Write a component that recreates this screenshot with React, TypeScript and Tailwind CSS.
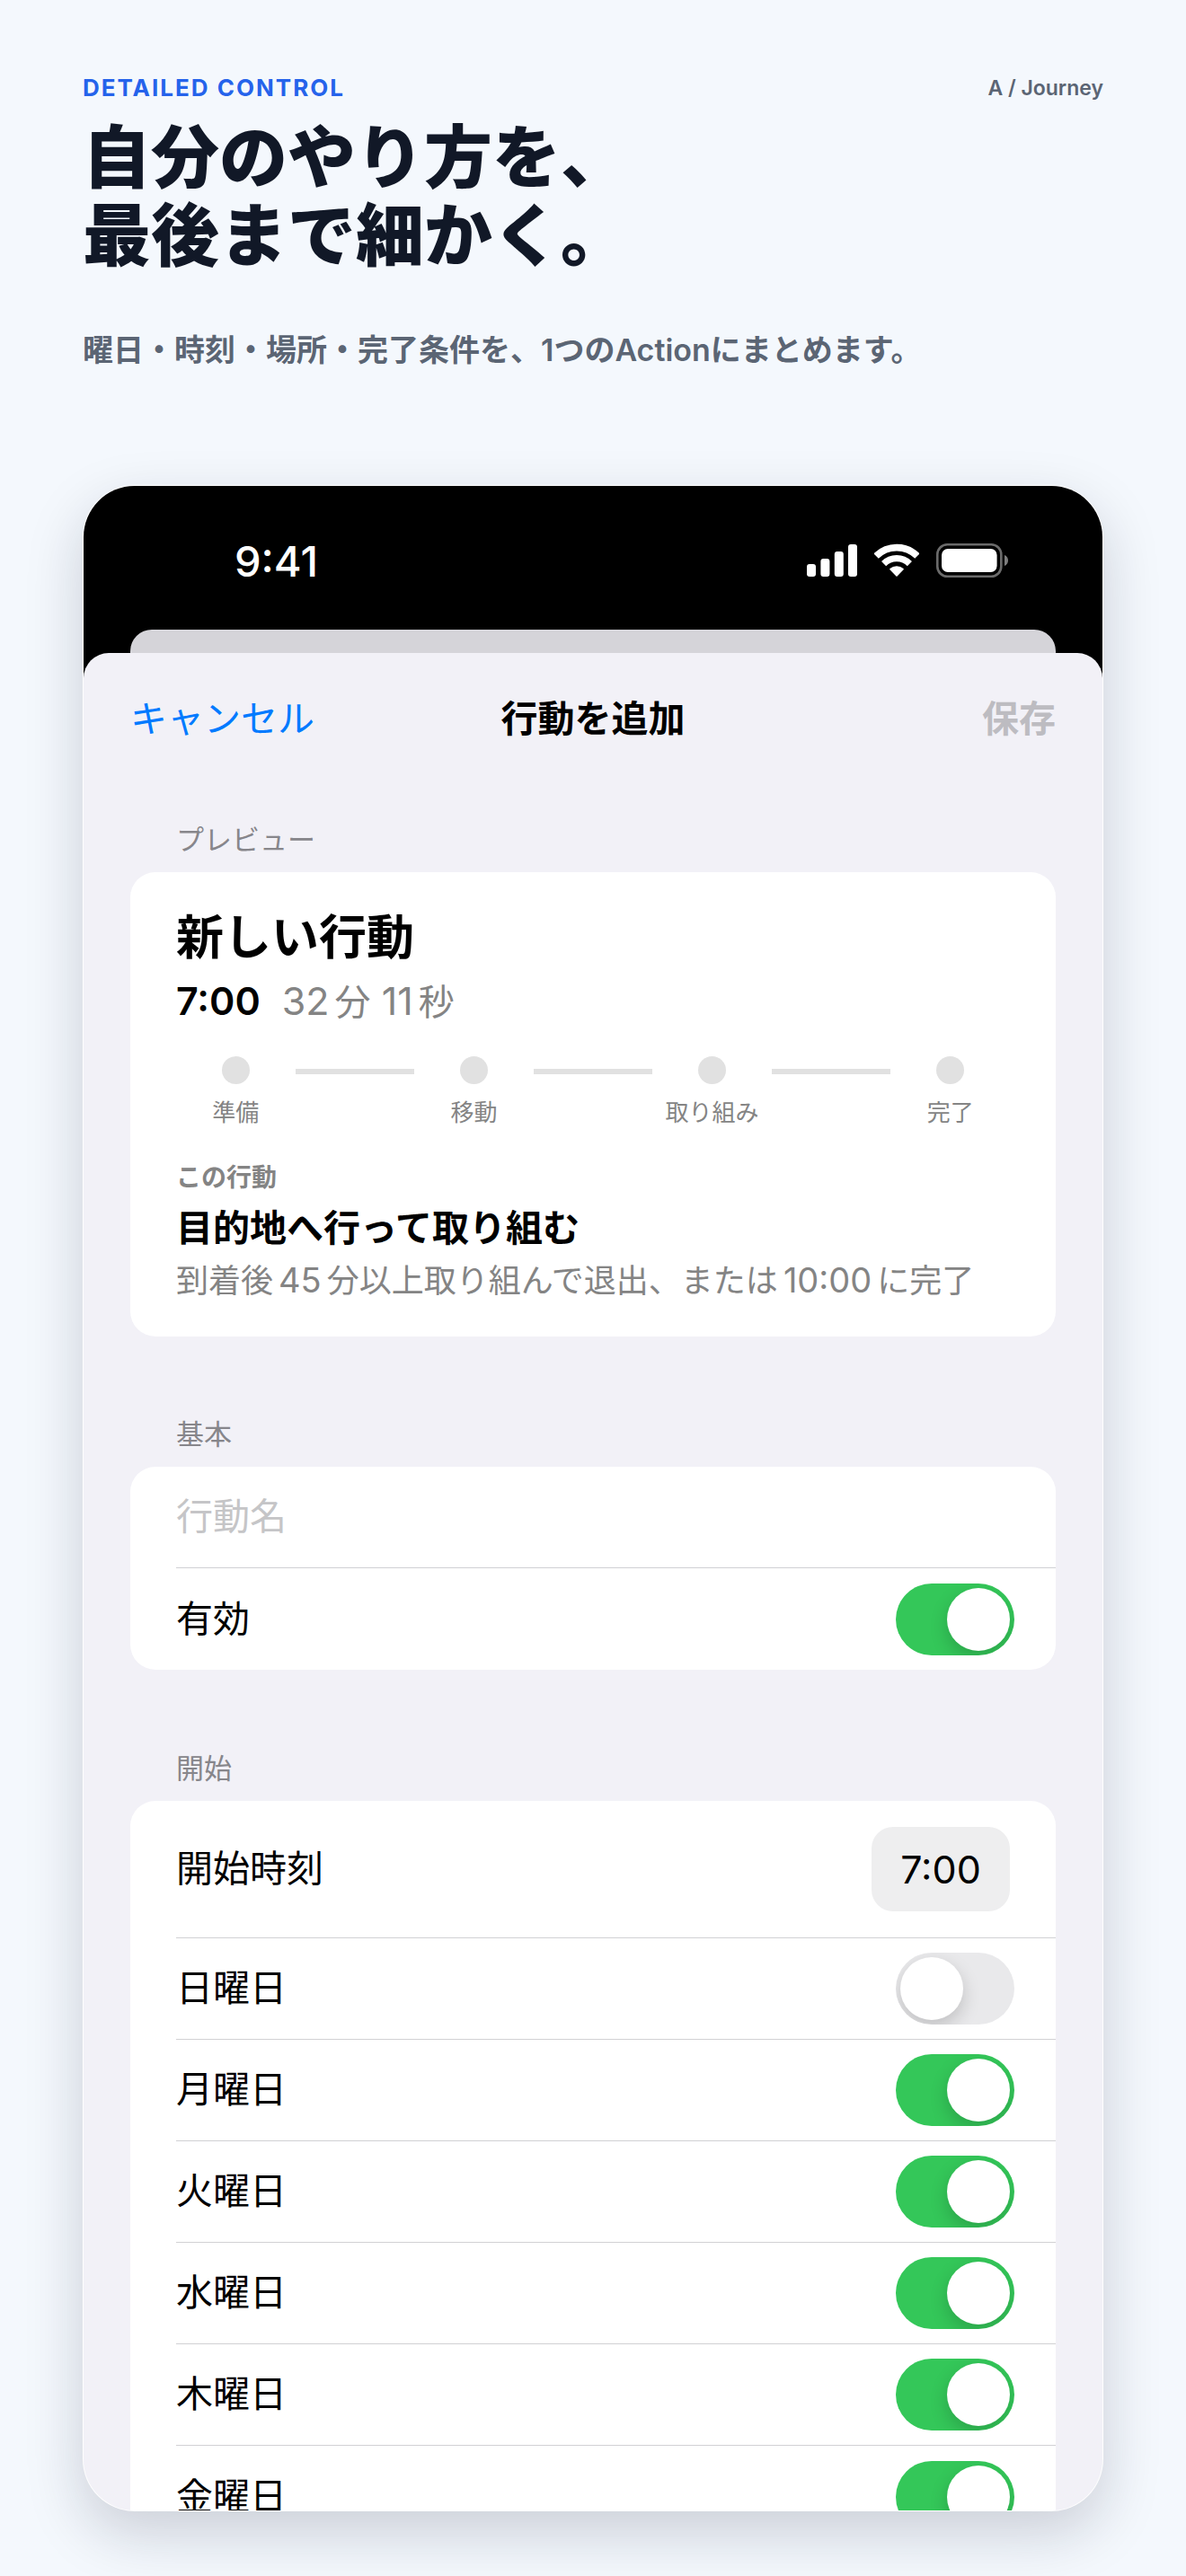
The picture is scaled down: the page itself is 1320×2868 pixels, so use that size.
import React, { useState } from 'react';

const STEPS = ['準備', '移動', '取り組み', '完了'];

const DAYS = [
  { id: 'sun', label: '日曜日', enabled: false },
  { id: 'mon', label: '月曜日', enabled: true },
  { id: 'tue', label: '火曜日', enabled: true },
  { id: 'wed', label: '水曜日', enabled: true },
  { id: 'thu', label: '木曜日', enabled: true },
  { id: 'fri', label: '金曜日', enabled: true },
];

const SignalIcon = () => (
  <svg width="56" height="38" viewBox="0 0 56 38" fill="currentColor" aria-hidden="true">
    <rect x="0" y="23" width="10" height="14" rx="3" />
    <rect x="15.4" y="17" width="10" height="20" rx="3" />
    <rect x="30.8" y="9" width="10" height="28" rx="3" />
    <rect x="46" y="1" width="10" height="36" rx="3" />
  </svg>
);

const WifiIcon = () => (
  <svg width="50" height="38" viewBox="0 0 50 38" fill="none" stroke="currentColor" aria-hidden="true">
    <path d="M2.1 14.1A32.4 32.4 0 0 1 47.9 14.1" strokeWidth="7.6" />
    <path d="M10.6 22.6A20.4 20.4 0 0 1 39.4 22.6" strokeWidth="7.3" />
    <path d="M25 36L18 28.6A10.6 10.6 0 0 1 32 28.6Z" fill="currentColor" strokeWidth="1.6" strokeLinejoin="round" />
  </svg>
);

const BatteryIcon = () => (
  <svg width="80" height="38" viewBox="0 0 80 38" aria-hidden="true">
    <rect x="1.3" y="1.3" width="71" height="35.4" rx="11" fill="none" stroke="#6b6b6b" strokeWidth="2.6" />
    <rect x="6" y="6" width="61.6" height="26" rx="7" fill="#fff" />
    <path d="M76 13C78.8 14.2 80 16.5 80 19C80 21.5 78.8 23.8 76 25Z" fill="#7d7d7d" />
  </svg>
);

const Num: React.FC<{ children: React.ReactNode }> = ({ children }) => (
  <span className="mx-1.5 text-[38px]">{children}</span>
);

interface SectionProps {
  title: string;
  className: string;
  children: React.ReactNode;
}

const Section: React.FC<SectionProps> = ({ title, className, children }) => (
  <section className={className}>
    <h3 className="mb-4 px-[51px] text-[31px] leading-10 text-[#87868b]">{title}</h3>
    <div className="rounded-[28px] bg-white">{children}</div>
  </section>
);

interface ToggleRowProps {
  id: string;
  label: string;
  defaultChecked: boolean;
  last?: boolean;
}

const ToggleRow: React.FC<ToggleRowProps> = ({ id, label, defaultChecked, last }) => {
  const [checked, setChecked] = useState(defaultChecked);

  return (
    <div className={`ml-[51px] flex h-[113px] items-center justify-between pr-[46px] ${last ? '' : 'border-b border-[#d1d1d4]'}`}>
      <label htmlFor={id}>{label}</label>
      <input
        id={id}
        type="checkbox"
        role="switch"
        checked={checked}
        onChange={(e) => setChecked(e.target.checked)}
        className="flex h-20 w-[132px] appearance-none items-center overflow-hidden rounded-full bg-[#e9e9eb] p-[5px] before:size-[70px] before:rounded-full before:bg-white before:shadow-[0_8px_20px_rgba(0,0,0,0.18)] checked:justify-end checked:bg-[#34c759]"
      />
    </div>
  );
};

const Preview = () => (
  <div className="px-[51px] pt-[43px] pb-[38px]">
    <p className="text-[53px] leading-[60px] font-semibold">新しい行動</p>
    <p className="mt-3 flex items-baseline gap-6 text-[43px] leading-14">
      <span className="font-semibold">7:00</span>
      <span className="text-[#848484]">
        32<span className="ml-1.5 text-[40px]">分</span> 11<span className="ml-1.5 text-[40px]">秒</span>
      </span>
    </p>

    <ol className="mt-8 flex">
      {STEPS.map((step, i) => (
        <React.Fragment key={step}>
          {i > 0 && <li aria-hidden="true" className="mt-3.5 h-1.5 flex-1 bg-[#e1e1e1]" />}
          <li className="flex flex-1 basis-0 flex-col items-center">
            <span className="size-[31px] rounded-full bg-[#e1e1e1]" />
            <span className="mt-3.5 text-[26px] leading-9 whitespace-nowrap text-[#848484]">{step}</span>
          </li>
        </React.Fragment>
      ))}
    </ol>

    <p className="mt-[34px] text-[28px] leading-10 font-semibold text-[#848484]">この行動</p>
    <p className="mt-2.5 text-[41px] leading-[52px] font-semibold">目的地へ行って取り組む</p>
    <p className="mt-2 text-[36px] leading-12 whitespace-nowrap text-[#848484]">
      到着後<Num>45</Num>分以上取り組んで退出、または<Num>10:00</Num>に完了
    </p>
  </div>
);

export default function App() {
  const [name, setName] = useState('');
  const [time, setTime] = useState('7:00');

  return (
    <main
      lang="ja"
      className="flex h-screen flex-col bg-[#f4f8fd] px-[92px] pt-20 pb-[72px] font-['Inter','Noto_Sans_CJK_JP',sans-serif]"
    >
      <header>
        <div className="flex items-center justify-between leading-9">
          <p className="text-[26px] font-bold tracking-[2px] text-[#2563eb]">DETAILED CONTROL</p>
          <p className="text-[23px] font-semibold text-[#5b6574]">A / Journey</p>
        </div>
        <h1 className="mt-4 text-[76px] leading-[87px] font-black text-[#111827]">
          自分のやり方を、
          <br />
          最後まで細かく。
        </h1>
        <p className="mt-15 text-[34px] leading-12 font-semibold text-[#5b6574]">
          曜日・時刻・場所・完了条件を、1つのActionにまとめます。
        </p>
      </header>

      <div className="mt-[126px] flex min-h-0 flex-1 flex-col overflow-hidden rounded-[58px] border border-white/90 bg-[#f2f1f7] shadow-[0_24px_64px_rgba(15,23,42,0.18)]">
        <div className="shrink-0 bg-black">
          <div className="flex h-40 items-start justify-between pt-16 pr-[105px] pl-[168px] text-white">
            <span className="text-[47px] leading-10 font-medium">9:41</span>
            <div className="flex items-center gap-[19px]">
              <SignalIcon />
              <WifiIcon />
              <BatteryIcon />
            </div>
          </div>
          <div className="mx-[52px] h-[26px] rounded-t-[24px] bg-[#d5d4d9]" />
          <div className="h-9 rounded-t-[28px] bg-[#f2f1f7]" />
        </div>

        <div className="shrink-0 px-[52px] text-[41px]">
          <div className="grid h-[108px] grid-cols-3 items-center pb-8">
            <button className="justify-self-start text-[#007aff]">キャンセル</button>
            <h2 className="text-center font-semibold">行動を追加</h2>
            <button disabled className="justify-self-end font-semibold text-[#bdbcc1]">
              保存
            </button>
          </div>

          <Section title="プレビュー" className="mt-11">
            <Preview />
          </Section>

          <Section title="基本" className="mt-[89px]">
            <div className="ml-[51px] flex h-[113px] items-center border-b border-[#d1d1d4]">
              <input
                type="text"
                aria-label="行動名"
                placeholder="行動名"
                value={name}
                onChange={(e) => setName(e.target.value)}
                className="w-full outline-none placeholder:text-[#c5c5c7]"
              />
            </div>
            <ToggleRow id="enabled" label="有効" defaultChecked last />
          </Section>

          <Section title="開始" className="mt-[90px]">
            <div className="ml-[51px] flex h-[153px] items-center justify-between border-b border-[#d1d1d4] pr-[51px]">
              <label htmlFor="start-time">開始時刻</label>
              <input
                id="start-time"
                type="text"
                value={time}
                onChange={(e) => setTime(e.target.value)}
                className="h-[94px] w-[154px] rounded-[24px] bg-[#eeeeef] text-center text-[43px]"
              />
            </div>
            {DAYS.map((day, i) => (
              <ToggleRow
                key={day.id}
                id={day.id}
                label={day.label}
                defaultChecked={day.enabled}
                last={i === DAYS.length - 1}
              />
            ))}
          </Section>
        </div>
      </div>
    </main>
  );
}
